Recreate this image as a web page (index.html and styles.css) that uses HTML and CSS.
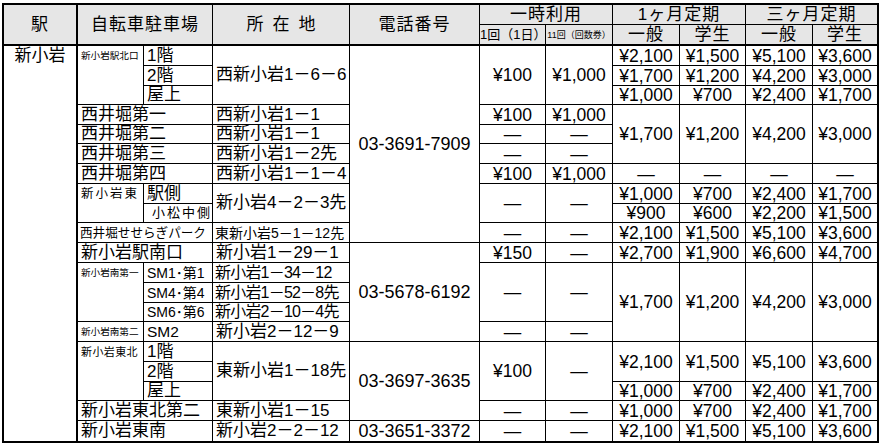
FILE: index.html
```html
<!DOCTYPE html>
<html lang="ja">
<head>
<meta charset="utf-8">
<title>自転車駐車場一覧</title>
<link rel="stylesheet" href="styles.css">
</head>
<body>
<table class="tbl">
<colgroup>
<col class="w1"><col class="w2"><col class="w3"><col class="w4"><col class="w5"><col class="w6"><col class="w7"><col class="w8"><col class="w9"><col class="w10"><col class="w11">
</colgroup>
<thead>
<tr class="h20">
<th rowspan="2" class="hb eki">駅</th>
<th rowspan="2" colspan="2" class="hb">自転車駐車場</th>
<th rowspan="2" class="hb sp">所在地</th>
<th rowspan="2" class="hb">電話番号</th>
<th colspan="2">一時利用</th>
<th colspan="2">1ヶ月定期</th>
<th colspan="2" class="r">三ヶ月定期</th>
</tr>
<tr class="h21">
<th class="hb s12">1回（1日）</th>
<th class="hb s8">11回（回数券）</th>
<th class="hb">一般</th>
<th class="hb">学生</th>
<th class="hb">一般</th>
<th class="hb r">学生</th>
</tr>
</thead>
<tbody>
<tr class="h20">
<td rowspan="20" class="st b">新小岩</td>
<td rowspan="3" class="lbl s9">新小岩駅北口</td>
<td>1階</td>
<td rowspan="3">西新小岩1－6－6</td>
<td rowspan="10" class="ph">03-3691-7909</td>
<td rowspan="3" class="c">¥100</td>
<td rowspan="3" class="c">¥1,000</td>
<td class="c">¥2,100</td><td class="c">¥1,500</td><td class="c">¥5,100</td><td class="c r">¥3,600</td>
</tr>
<tr class="h20">
<td>2階</td>
<td class="c">¥1,700</td><td class="c">¥1,200</td><td class="c">¥4,200</td><td class="c r">¥3,000</td>
</tr>
<tr class="h19">
<td>屋上</td>
<td class="c">¥1,000</td><td class="c">¥700</td><td class="c">¥2,400</td><td class="c r">¥1,700</td>
</tr>
<tr class="h20">
<td colspan="2">西井堀第一</td>
<td>西新小岩1－1</td>
<td class="c">¥100</td><td class="c">¥1,000</td>
<td rowspan="3" class="c">¥1,700</td><td rowspan="3" class="c">¥1,200</td><td rowspan="3" class="c">¥4,200</td><td rowspan="3" class="c r">¥3,000</td>
</tr>
<tr class="h19">
<td colspan="2">西井堀第二</td>
<td>西新小岩1－1</td>
<td class="c">—</td><td class="c">—</td>
</tr>
<tr class="h20">
<td colspan="2">西井堀第三</td>
<td>西新小岩1－2先</td>
<td class="c">—</td><td class="c">—</td>
</tr>
<tr class="h20">
<td colspan="2">西井堀第四</td>
<td>西新小岩1－1－4</td>
<td class="c">¥100</td><td class="c">¥1,000</td>
<td class="c">—</td><td class="c">—</td><td class="c">—</td><td class="c r">—</td>
</tr>
<tr class="h20">
<td rowspan="2" class="lbl s13">新小岩東</td>
<td>駅側</td>
<td rowspan="2">新小岩4－2－3先</td>
<td rowspan="2" class="c">—</td><td rowspan="2" class="c">—</td>
<td class="c">¥1,000</td><td class="c">¥700</td><td class="c">¥2,400</td><td class="c r">¥1,700</td>
</tr>
<tr class="h19">
<td class="kmt">小松中側</td>
<td class="c">¥900</td><td class="c">¥600</td><td class="c">¥2,200</td><td class="c r">¥1,500</td>
</tr>
<tr class="h20">
<td colspan="2" class="s125">西井堀せせらぎパーク</td>
<td class="s14">東新小岩5－1－12先</td>
<td class="c">—</td><td class="c">—</td>
<td class="c">¥2,100</td><td class="c">¥1,500</td><td class="c">¥5,100</td><td class="c r">¥3,600</td>
</tr>
<tr class="h20">
<td colspan="2">新小岩駅南口</td>
<td>新小岩1－29－1</td>
<td rowspan="5" class="ph">03-5678-6192</td>
<td class="c">¥150</td><td class="c">—</td>
<td class="c">¥2,700</td><td class="c">¥1,900</td><td class="c">¥6,600</td><td class="c r">¥4,700</td>
</tr>
<tr class="h20">
<td rowspan="3" class="lbl s9">新小岩南第一</td>
<td class="sm">SM1･第1</td>
<td class="ad">新小岩1－34－12</td>
<td rowspan="3" class="c">—</td><td rowspan="3" class="c">—</td>
<td rowspan="4" class="c">¥1,700</td><td rowspan="4" class="c">¥1,200</td><td rowspan="4" class="c">¥4,200</td><td rowspan="4" class="c r">¥3,000</td>
</tr>
<tr class="h20">
<td class="sm">SM4･第4</td>
<td class="ad">新小岩1－52－8先</td>
</tr>
<tr class="h19">
<td class="sm">SM6･第6</td>
<td class="ad">新小岩2－10－4先</td>
</tr>
<tr class="h20">
<td class="lbl s9 mid">新小岩南第二</td>
<td class="sm2">SM2</td>
<td>新小岩2－12－9</td>
<td class="c">—</td><td class="c">—</td>
</tr>
<tr class="h20">
<td rowspan="3" class="lbl s12l">新小岩東北</td>
<td>1階</td>
<td rowspan="3">東新小岩1－18先</td>
<td rowspan="4" class="ph">03-3697-3635</td>
<td rowspan="3" class="c">¥100</td><td rowspan="3" class="c">—</td>
<td rowspan="2" class="c">¥2,100</td><td rowspan="2" class="c">¥1,500</td><td rowspan="2" class="c">¥5,100</td><td rowspan="2" class="c r">¥3,600</td>
</tr>
<tr class="h20">
<td>2階</td>
</tr>
<tr class="h19">
<td>屋上</td>
<td class="c">¥1,000</td><td class="c">¥700</td><td class="c">¥2,400</td><td class="c r">¥1,700</td>
</tr>
<tr class="h20">
<td colspan="2">新小岩東北第二</td>
<td>東新小岩1－15</td>
<td class="c">—</td><td class="c">—</td>
<td class="c">¥1,000</td><td class="c">¥700</td><td class="c">¥2,400</td><td class="c r">¥1,700</td>
</tr>
<tr class="h20">
<td colspan="2" class="b">新小岩東南</td>
<td class="b">新小岩2－2－12</td>
<td class="ph b">03-3651-3372</td>
<td class="c b">—</td><td class="c b">—</td>
<td class="c b">¥2,100</td><td class="c b">¥1,500</td><td class="c b">¥5,100</td><td class="c r b">¥3,600</td>
</tr>
</tbody>
</table>
</body>
</html>
```

FILE: styles.css
```css
html, body {
  margin: 0;
  padding: 0;
  background: #ffffff;
}

body {
  font-family: "Liberation Sans", "Noto Sans CJK JP", sans-serif;
  color: #000000;
}

.tbl {
  border-collapse: separate;
  border-spacing: 0;
  table-layout: fixed;
  width: 877px;
  border: 2px solid #000000;
  margin: 3px 0 0 2px;
}

.w1 { width: 74px; }
.w2 { width: 66px; }
.w3 { width: 69px; }
.w4 { width: 137px; }
.w5 { width: 130px; }
.w6 { width: 66px; }
.w7 { width: 67px; }
.w8 { width: 67px; }
.w9 { width: 66px; }
.w10 { width: 67px; }
.w11 { width: 64px; }

.h19 { height: 19px; }
.h20 { height: 20px; }
.h21 { height: 21px; }

.tbl th,
.tbl td {
  border-right: 1px solid #000000;
  border-bottom: 1px solid #000000;
  padding: 0 0 0 3px;
  font-size: 17px;
  line-height: 18px;
  font-weight: normal;
  white-space: nowrap;
  overflow: hidden;
  text-align: left;
  vertical-align: middle;
}

.tbl th {
  background: #e6e6e6;
  text-align: center;
  padding: 0;
  letter-spacing: 1px;
}

.tbl .hb { border-bottom: 2px solid #000000; }
.tbl .eki { border-right: 2px solid #000000; }
.tbl .sp { letter-spacing: 9px; text-indent: 9px; }
.tbl .s12 { font-size: 13px; letter-spacing: 0; }
.tbl .s8 { font-size: 9px; letter-spacing: 0; }

.tbl .r { border-right: none; }
.tbl .b { border-bottom: none; }

.tbl .st {
  border-right: 2px solid #000000;
  vertical-align: top;
  text-align: center;
  padding: 1px 0 0;
}

.tbl .lbl {
  vertical-align: top;
  line-height: 20px;
  padding-left: 3px;
}

.tbl .s9 { font-size: 9.6px; line-height: 19px; }
.tbl .s13 { font-size: 12.5px; letter-spacing: 2px; }
.tbl .s12l { font-size: 11px; letter-spacing: 0.4px; }
.tbl .mid { vertical-align: middle; }

.tbl .kmt {
  font-size: 13px;
  letter-spacing: 2px;
  text-align: right;
  padding: 0;
}

.tbl .s125 { font-size: 12.6px; padding-left: 2px; }
.tbl .s14 { font-size: 14px; padding-left: 2px; }
.tbl .ad { font-size: 16px; letter-spacing: -0.8px; padding-left: 2px; }
.tbl .sm { font-size: 14px; padding-left: 3px; }
.tbl .sm2 { font-size: 15.5px; padding-left: 3px; }

.tbl .c {
  text-align: center;
  padding: 0;
  font-size: 17.5px;
}

.tbl .ph {
  text-align: center;
  padding: 0;
  font-size: 18px;
}
```
